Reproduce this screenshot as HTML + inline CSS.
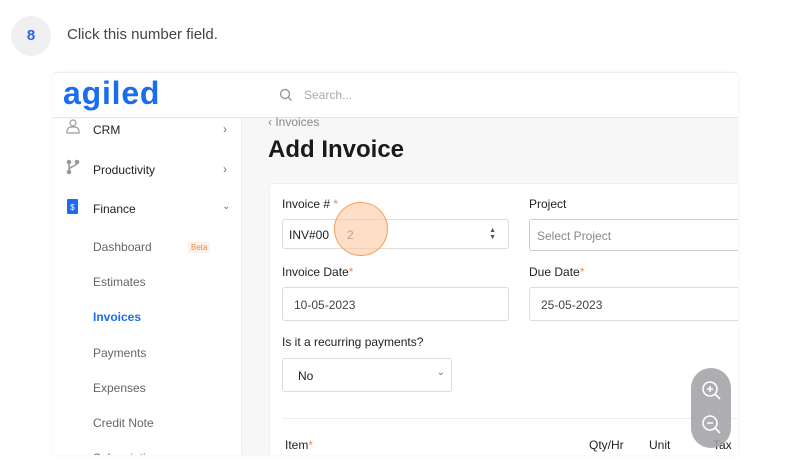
<!DOCTYPE html>
<html><head><style>
*{margin:0;padding:0;box-sizing:border-box}
body{width:795px;height:472px;background:#fff;font-family:"Liberation Sans",sans-serif;position:relative;overflow:hidden;color:#222}
.a{position:absolute}
.lbl{font-size:12px;color:#222}
.inp{position:absolute;border:1px solid #ddd;border-radius:3px;background:#fff;font-size:12px;color:#444}
.side{font-size:12px;color:#222}
.sub{font-size:12px;color:#666}
</style></head><body>
<div class="a" style="left:11px;top:16px;width:40px;height:40px;border-radius:50%;background:#f0f0f2;color:#2563eb;font-weight:bold;font-size:15px;text-align:center;line-height:40px">8</div>
<div class="a" style="left:67px;top:26px;font-size:15px;color:#444">Click this number field.</div>

<div class="a" style="left:53px;top:72px;width:685px;height:383px;overflow:hidden;background:#f7f7f8;border-top:1px solid #eee;border-radius:4px 4px 0 0;box-shadow:0 0 3px rgba(0,0,0,0.06)">
 <div class="a" style="left:0;top:0;width:685px;height:45px;background:#fff;border-bottom:1px solid #e6e6e6"></div>
 <div class="a" style="left:10px;top:2px;font-size:32px;font-weight:bold;color:#1a6cf0;letter-spacing:0.8px">agiled</div>
 <svg class="a" style="left:226px;top:15px" width="14" height="14"><circle cx="6" cy="6" r="4.5" fill="none" stroke="#999" stroke-width="1.4"/><line x1="9.5" y1="9.5" x2="12.5" y2="12.5" stroke="#999" stroke-width="1.4"/></svg>
 <div class="a" style="left:251px;top:15px;font-size:12px;color:#aaa">Search...</div>
 <div class="a" style="left:0;top:46px;width:189px;height:340px;background:#fff;border-right:1px solid #eee"></div>
 <svg class="a" style="left:13px;top:46px" width="14" height="16"><circle cx="7" cy="4" r="3" fill="none" stroke="#999" stroke-width="1.2"/><path d="M1 14v-2a4 4 0 0 1 4-4h4a4 4 0 0 1 4 4v2z" fill="none" stroke="#999" stroke-width="1.2"/></svg>
 <div class="a side" style="left:40px;top:50px">CRM</div>
 <div class="a" style="left:170px;top:49px;color:#777;font-size:12px">›</div>
 <svg class="a" style="left:13px;top:86px" width="14" height="16"><circle cx="3" cy="3" r="2.3" fill="#999"/><circle cx="3" cy="13" r="2.3" fill="#999"/><circle cx="11" cy="3" r="2.3" fill="#999"/><path d="M3 3v10M11 3c0 5-8 4-8 8" stroke="#999" stroke-width="1.5" fill="none"/></svg>
 <div class="a side" style="left:40px;top:90px">Productivity</div>
 <div class="a" style="left:170px;top:89px;color:#777;font-size:12px">›</div>
 <div class="a" style="left:14px;top:126px;width:11px;height:15px;background:#1a6cf0;border-radius:1px;color:#fff;font-size:8px;text-align:center;line-height:17px">$</div>
 <div class="a side" style="left:40px;top:129px">Finance</div>
 <div class="a" style="left:169px;top:128px;color:#777;font-size:10px">⌄</div>
 <div class="a sub" style="left:40px;top:167px">Dashboard</div>
 <div class="a" style="left:135px;top:169px;font-size:8px;color:#f08a4b;background:#fdf1ea;padding:1px 3px">Beta</div>
 <div class="a sub" style="left:40px;top:202px">Estimates</div>
 <div class="a" style="left:40px;top:237px;font-size:12px;color:#1a6cf0;font-weight:bold">Invoices</div>
 <div class="a sub" style="left:40px;top:273px">Payments</div>
 <div class="a sub" style="left:40px;top:308px">Expenses</div>
 <div class="a sub" style="left:40px;top:343px">Credit Note</div>
 <div class="a sub" style="left:40px;top:378px">Subscriptions</div>

 <div class="a" style="left:215px;top:42px;font-size:12px;color:#888">‹ Invoices</div>
 <div class="a" style="left:215px;top:63px;font-size:24px;font-weight:bold;color:#1a1a1a">Add Invoice</div>
 <div class="a" style="left:216px;top:110px;width:480px;height:290px;background:#fff;border:1px solid #eee;border-radius:4px"></div>
 <div class="a lbl" style="left:229px;top:124px">Invoice # <span style="color:#f08a4b">*</span></div>
 <div class="inp" style="left:229px;top:146px;width:227px;height:30px;padding:8px 6px;color:#222">INV#00<span style="position:absolute;left:64px;top:8px;color:#666">2</span><span style="position:absolute;right:12px;top:7px;font-size:7px;line-height:7px;color:#555">▲<br>▼</span></div>
 <div class="a lbl" style="left:476px;top:124px">Project</div>
 <div class="inp" style="left:476px;top:146px;width:230px;height:32px;padding:9px 7px;color:#888;border-color:#ccc">Select Project</div>
 <div class="a lbl" style="left:229px;top:192px">Invoice Date<span style="color:#f08a4b">*</span></div>
 <div class="inp" style="left:229px;top:214px;width:227px;height:34px;padding:10px 11px">10-05-2023</div>
 <div class="a lbl" style="left:476px;top:192px">Due Date<span style="color:#f08a4b">*</span></div>
 <div class="inp" style="left:476px;top:214px;width:230px;height:34px;padding:10px 11px">25-05-2023</div>
 <div class="a lbl" style="left:229px;top:262px">Is it a recurring payments?</div>
 <div class="inp" style="left:229px;top:285px;width:170px;height:34px;padding:10px 15px;color:#222">No<span style="position:absolute;right:6px;top:8px;color:#777;font-size:10px">⌄</span></div>
 <div class="a" style="left:229px;top:345px;width:470px;height:1px;background:#eee"></div>
 <div class="a lbl" style="left:232px;top:365px">Item<span style="color:#f08a4b">*</span></div>
 <div class="a lbl" style="left:536px;top:365px">Qty/Hr</div>
 <div class="a lbl" style="left:596px;top:365px">Unit</div>
 <div class="a lbl" style="left:660px;top:365px">Tax</div>
</div>

<div class="a" style="left:334px;top:202px;width:54px;height:54px;border-radius:50%;background:rgba(252,200,160,0.6);border:1.5px solid #f5a060"></div>

<div class="a" style="left:691px;top:368px;width:40px;height:80px;border-radius:20px;background:rgba(160,160,165,0.85)"></div>
<svg class="a" style="left:700px;top:379px" width="22" height="22"><circle cx="10" cy="10" r="7" fill="none" stroke="#fff" stroke-width="1.6"/><path d="M15 15l5 5M7 10h6M10 7v6" stroke="#fff" stroke-width="1.6"/></svg>
<svg class="a" style="left:700px;top:413px" width="22" height="22"><circle cx="10" cy="10" r="7" fill="none" stroke="#fff" stroke-width="1.6"/><path d="M15 15l5 5M7 10h6" stroke="#fff" stroke-width="1.6"/></svg>
</body></html>
